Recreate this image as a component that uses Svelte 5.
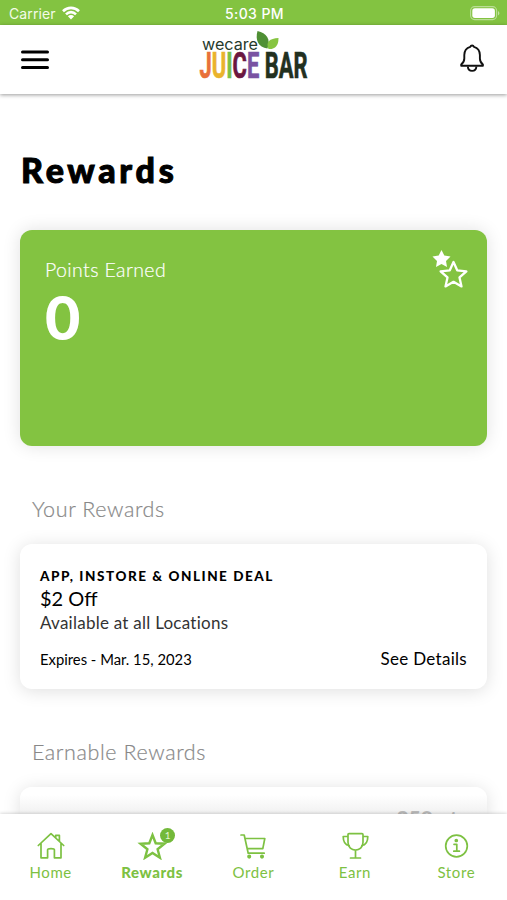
<script lang="ts">
  type Tab = {
    id: string;
    label: string;
    badge?: number;
  };

  let active = $state("rewards");

  const tabs: Tab[] = [
    { id: "home", label: "Home" },
    { id: "rewards", label: "Rewards", badge: 1 },
    { id: "order", label: "Order" },
    { id: "earn", label: "Earn" },
    { id: "store", label: "Store" }
  ];
</script>

<div class="screen">
  <div class="status">
    <div class="carrier">
      <span>Carrier</span>
      <svg width="18" height="14" viewBox="0 0 18 14" fill="none" stroke="#fff" stroke-width="2.6">
        <path d="M1 5.2C5.6.7 12.4.7 17 5.2" />
        <path d="M4 8.3c2.9-2.9 7.1-2.9 10 0" />
        <path d="M9 13.4 5.9 10.3c1.8-1.7 4.4-1.7 6.2 0Z" fill="#fff" stroke="none" />
      </svg>
    </div>
    <span class="time">5:03 PM</span>
    <svg class="battery" width="30" height="15" viewBox="0 0 30 15">
      <rect x="0.6" y="0.6" width="26" height="13" rx="4" fill="none" stroke="#fff" stroke-opacity="0.45" stroke-width="1.1" />
      <rect x="2.3" y="2.3" width="22.6" height="9.6" rx="2.6" fill="#fff" />
      <path d="M28 5v4.4c1.9-.8 1.9-3.6 0-4.4Z" fill="#fff" fill-opacity="0.5" />
    </svg>
  </div>

  <header>
    <button type="button" aria-label="Menu">
      <svg width="28" height="20" viewBox="0 0 28 20" stroke="#000" stroke-width="3" stroke-linecap="round">
        <path d="M1.5 2h25M1.5 9.8h25M1.5 17.6h25" />
      </svg>
    </button>
    <svg class="logo" width="112" height="52" viewBox="0 0 112 52" role="img" aria-label="wecare Juice Bar">
      <text class="wecare" x="3" y="16.5" textLength="56" lengthAdjust="spacingAndGlyphs">wecare</text>
      <text class="juice" x="0.5" y="45" textLength="108" lengthAdjust="spacingAndGlyphs">
        <tspan fill="#e8703a" stroke="#e8703a">J</tspan><tspan fill="#eab32c" stroke="#eab32c">U</tspan><tspan fill="#7ac143" stroke="#7ac143">I</tspan><tspan fill="#6b1740" stroke="#6b1740">C</tspan><tspan fill="#7853a2" stroke="#7853a2">E</tspan><tspan class="bar" fill="#22301f" stroke="#22301f">&nbsp;BAR</tspan>
      </text>
      <path d="M68.500 15.500C59 14 56 7 58.500-2c9 2 13.500 8 10 17.500Z" fill="#4f8f34" />
      <path d="M69.500 16c-3-7 1-10.500 10-11 0 8-3.500 11.500-10 11Z" fill="#86c440" />
    </svg>
    <button type="button" class="bell" aria-label="Notifications">
      <svg width="26" height="30" viewBox="0 0 26 30" fill="none" stroke="#111" stroke-width="1.9" stroke-linejoin="round">
        <path d="M11.300 3.800a1.900 1.900 0 0 1 3.600 0c4 1.200 6 4.200 6 8.200v3.500c0 2.500.8 4.300 3 6.100v1.100H2.200v-1.100c2.200-1.800 3.100-3.600 3.100-6.100V12c0-4 2-7 6-8.200Z" />
        <path d="M8.800 23.500c.4 5.800 8.200 5.800 8.600 0" />
      </svg>
    </button>
  </header>

  <main>
    <h1>Rewards</h1>

    <section class="points">
      <div>
        <div class="points-label">Points Earned</div>
        <div class="points-value">0</div>
      </div>
      <svg width="38" height="42" viewBox="0 0 38 42">
        <path d="m10.500 1 2.800 5.600 6.200.9-4.500 4.400 1 6.100-5.500-2.900L5 18l1-6.100L1.500 7.500l6.200-.9Z" fill="#fff" />
        <path d="m22.500 13 3.700 8.300 9.200 1-6.900 6.100 2 9-8-4.600-8 4.600 2-9-6.900-6.100 9.200-1Z" fill="#83c341" stroke="#fff" stroke-width="2.300" stroke-linejoin="round" />
      </svg>
    </section>

    <h2>Your Rewards</h2>
    <article class="card">
      <div class="kind">APP, INSTORE &amp; ONLINE DEAL</div>
      <div class="offer">$2 Off</div>
      <div class="where">Available at all Locations</div>
      <div class="foot">
        <span class="expires">Expires - Mar. 15, 2023</span>
        <span class="details">See Details</span>
      </div>
    </article>

    <h2>Earnable Rewards</h2>
    <article class="card next">
      <span class="cost">250 pts</span>
    </article>
  </main>

  <nav>
    {#each tabs as tab (tab.id)}
      <button type="button" class="tab" class:active={active === tab.id} onclick={() => (active = tab.id)}>
        <span class="icon">
          <svg width="30" height="28" viewBox="0 0 30 28" fill="none" stroke="currentColor" stroke-width="1.700" stroke-linecap="round" stroke-linejoin="round">
            {#if tab.id === "home"}
              <path d="M2.300 13.500 15 1.600l12.700 11.900M5 11.500v14.300h6.600v-8c0-1.700 6.800-1.700 6.800 0v8H25V11.500M19.700 5.500V3.400h3.700V9" />
            {:else if tab.id === "rewards"}
              <path stroke-width="2.400" stroke-linejoin="miter" d="m15.500 3 3.200 8.300 8.700.4-6.800 5.500 2.300 8.500-7.400-4.800-7.400 4.800 2.300-8.500-6.800-5.500 8.700-.4Z" />
            {:else if tab.id === "order"}
              <path d="M3 3h3.200l4 18.200h16M6.900 6.500h19.900l-2 10.200H9.200" />
              <circle cx="11.200" cy="24.600" r="1.200" fill="currentColor" />
              <circle cx="24" cy="24.600" r="1.200" fill="currentColor" />
            {:else if tab.id === "earn"}
              <path d="M9 1.700h13c.6 0 1 .4 1 1v7.600c0 10.300-15 10.300-15 0V2.700c0-.6.400-1 1-1ZM15.500 18.200v7.500M10.500 26h10M8 4.500H3.200c0 4.800 2 8.500 6 9M23 4.500h4.800c0 4.800-2 8.500-6 9" />
            {:else}
              <circle cx="15.500" cy="14" r="10.800" />
              <path d="M13 12.300h2.800V19M12.800 19.200h5.600" />
              <circle cx="15.300" cy="8.500" r="1" fill="currentColor" />
            {/if}
          </svg>
          {#if tab.badge}
            <span class="badge">{tab.badge}</span>
          {/if}
        </span>
        <span class="label">{tab.label}</span>
      </button>
    {/each}
  </nav>
</div>

<style>
  :global(body) {
    margin: 0;
    background: #fff;
  }
  .screen {
    display: flex;
    flex-direction: column;
    height: 900px;
    overflow: hidden;
    background: #fff;
    color: #000;
    font-family: Lato, "Open Sans", sans-serif;
  }
  button {
    display: flex;
    border: 0;
    background: none;
    padding: 0;
    font: inherit;
  }
  .status {
    display: grid;
    flex: none;
    grid-template-columns: 1fr auto 1fr;
    align-items: center;
    box-sizing: border-box;
    height: 25px;
    padding: 2px 7px 0 9px;
    background: #83c341;
    color: #fff;
    font-family: Inter, sans-serif;
    font-size: 14px;
    line-height: 22px;
  }
  .carrier {
    display: flex;
    align-items: center;
    gap: 6px;
    color: #f3fbe9;
    letter-spacing: 0.1px;
  }
  .carrier svg {
    margin-top: -2px;
  }
  .time {
    font-weight: 500;
    letter-spacing: 0.4px;
  }
  .battery {
    justify-self: end;
  }
  header {
    display: flex;
    z-index: 1;
    flex: none;
    align-items: center;
    justify-content: space-between;
    box-sizing: border-box;
    height: 69px;
    padding: 0 22px 0 21px;
    background: #fff;
    box-shadow: 0 1px 4px rgb(0 0 0 / 0.4);
  }
  .logo {
    margin: 0 0 1px 2px;
    overflow: visible;
  }
  .wecare {
    fill: #263a2b;
    font-family: Inter, sans-serif;
    font-size: 16px;
  }
  .juice {
    font-family: Roboto, sans-serif;
    font-size: 37px;
    font-weight: 700;
    stroke-width: 0.7px;
  }
  .bell {
    margin-top: -3px;
  }
  main {
    flex: 1;
    min-height: 0;
    padding: 0 20px;
    overflow: hidden;
  }
  h1 {
    margin: 56px 0 0 1px;
    font-size: 34px;
    font-weight: 900;
    letter-spacing: 3.7px;
    line-height: 40px;
    -webkit-text-stroke: 1px #000;
  }
  .points {
    display: flex;
    justify-content: space-between;
    box-sizing: border-box;
    height: 216px;
    margin-top: 39.500px;
    border-radius: 12px;
    padding: 19px 18px 0 25px;
    background: #83c341;
    box-shadow: 0 0 18px rgb(0 0 0 / 0.12);
    color: #fff;
  }
  .points-label {
    font-size: 19.5px;
    font-weight: 300;
    letter-spacing: 0.4px;
    line-height: 42px;
    -webkit-text-stroke: 0.2px #fff;
  }
  .points-value {
    font-size: 61px;
    font-weight: 900;
    line-height: 51px;
  }
  h2 {
    margin: 47.500px 0 18px 12px;
    color: #888;
    font-size: 21.5px;
    font-weight: 300;
    letter-spacing: 0.6px;
    line-height: 33px;
    -webkit-text-stroke: 0.2px #888;
  }
  .card {
    display: flex;
    flex-direction: column;
    box-sizing: border-box;
    height: 144.500px;
    border-radius: 12px;
    padding: 20px 20px 0;
    background: #fff;
    box-shadow: 0 2px 18px rgb(0 0 0 / 0.13);
  }
  .kind {
    font-size: 13.5px;
    font-weight: 900;
    letter-spacing: 1.55px;
    line-height: 24px;
  }
  .offer {
    font-size: 20px;
    line-height: 21px;
  }
  .where {
    color: #333;
    font-size: 17px;
    letter-spacing: 0.25px;
    line-height: 28px;
  }
  .foot {
    display: flex;
    justify-content: space-between;
    margin-top: 10px;
    line-height: 24px;
  }
  .expires {
    font-size: 14.8px;
  }
  .details {
    font-size: 17px;
    letter-spacing: 0.3px;
  }
  .next {
    align-items: flex-end;
    padding-top: 17px;
    background: linear-gradient(#fff, #fff 8px, #f0f0f0 28px);
  }
  .cost {
    color: #bbb;
    font-size: 21px;
    font-weight: 900;
    line-height: 28px;
  }
  nav {
    display: grid;
    z-index: 1;
    flex: none;
    grid-template-columns: repeat(5, 1fr);
    height: 86px;
    background: #fff;
    box-shadow: 0 -1px 3px rgb(0 0 0 / 0.15);
    color: #7dc142;
  }
  .tab {
    flex-direction: column;
    align-items: center;
    padding-top: 18px;
    color: inherit;
    font-size: 15px;
    line-height: 20px;
  }
  .icon {
    position: relative;
    height: 30px;
  }
  .badge {
    position: absolute;
    top: -4px;
    right: -8px;
    width: 15px;
    height: 15px;
    border-radius: 50%;
    background: #73b93a;
    color: #e4f5d3;
    font-size: 10px;
    font-weight: 400;
    line-height: 15px;
    text-align: center;
  }
  .label {
    letter-spacing: 0.6px;
  }
  .active .label {
    font-weight: 900;
  }
</style>
